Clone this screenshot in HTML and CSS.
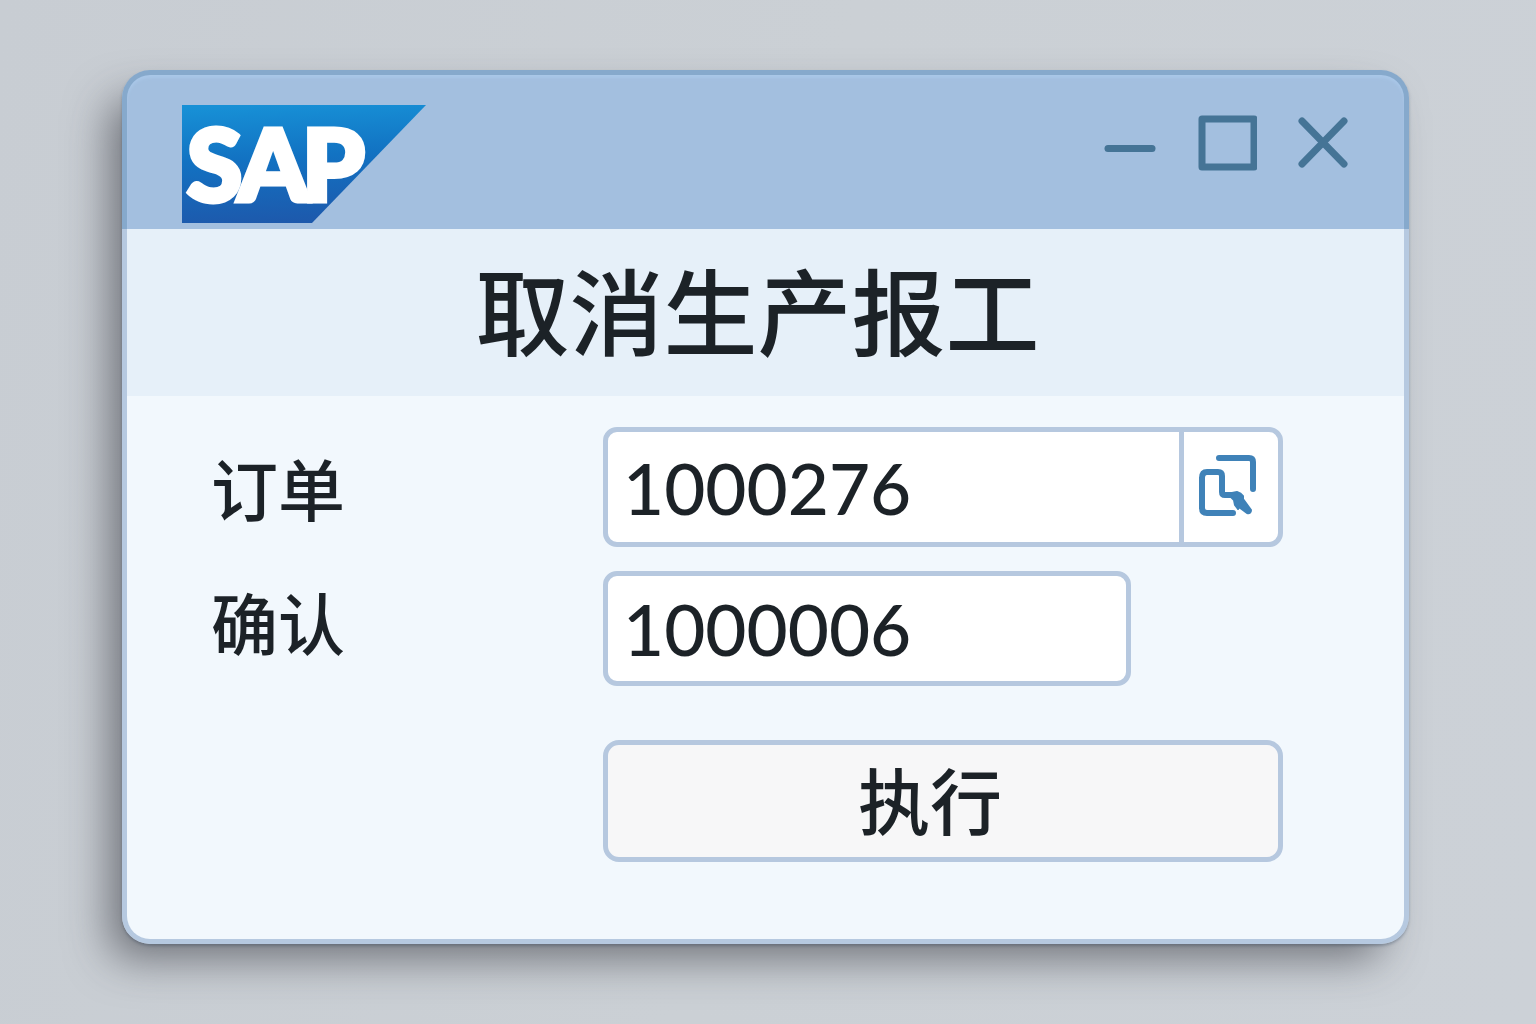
FILE: index.html
```html
<!DOCTYPE html>
<html lang="zh-CN">
<head>
<meta charset="utf-8">
<meta name="viewport" content="width=device-width, initial-scale=1">
<title>取消生产报工</title>
<link rel="stylesheet" href="styles.css">
</head>
<body>
<main class="window">
  <header class="titlebar">
    <svg class="logo" viewBox="0 0 244 118" role="img" aria-label="SAP">
      <defs>
        <linearGradient id="logo-fill" x1="0.3" y1="0" x2="0.4" y2="1">
          <stop offset="0" stop-color="#1790d6"/>
          <stop offset="0.45" stop-color="#1272c2"/>
          <stop offset="1" stop-color="#1d59ac"/>
        </linearGradient>
      </defs>
      <polygon points="0,0 244,0 130,118 0,118" fill="url(#logo-fill)"/>
      <text class="logo-text" x="5 56 120" y="96">SAP</text>
    </svg>
    <div class="controls">
      <button type="button" class="control" aria-label="最小化">
        <svg width="52" height="56" viewBox="0 0 52 56"><path d="M4 33.500H48" stroke-width="7"/></svg>
      </button>
      <button type="button" class="control" aria-label="最大化">
        <svg width="60" height="56" viewBox="0 0 60 56"><rect x="5" y="4" width="52" height="48" stroke-width="7"/></svg>
      </button>
      <button type="button" class="control" aria-label="关闭">
        <svg width="50" height="56" viewBox="0 0 50 56"><path d="M4 6L46 49M46 6L4 49" stroke-width="7"/></svg>
      </button>
    </div>
  </header>
  <h1 class="title">取消生产报工</h1>
  <form class="form">
    <div class="labels">
      <label for="order">订单</label>
      <label for="confirmation">确认</label>
    </div>
    <div class="fields">
      <div class="field order">
        <input id="order" type="text" value="1000276">
        <button type="button" class="lookup" aria-label="选择订单">
          <svg width="60" height="64" viewBox="0 0 60 64">
            <path d="M21 5H51Q55 5 55 9V36"/>
            <path d="M35 60H9Q4 60 4 55V25Q4 19 9 19H20Q24 19 24 23V39Q24 42 27 42H34"/>
            <path class="hand" d="M34 40L39 39Q43 40 45 43L45 46L53 57Q53 61 49 60L41 54L40 56L37 52L36 47L32 43Z"/>
          </svg>
        </button>
      </div>
      <div class="field confirmation">
        <input id="confirmation" type="text" value="1000006">
      </div>
      <button type="submit" class="execute">执行</button>
    </div>
  </form>
</main>
</body>
</html>
```
FILE: styles.css
```css
* {
  box-sizing: border-box;
}

body {
  margin: 0;
  min-height: 100vh;
  padding: 70px 127px 80px 122px;
  background: linear-gradient(100deg, #c8cdd3 0%, #cbd0d5 50%, #ccd1d7 100%);
  color: #1c2227;
  font-family: "Noto Sans CJK SC", sans-serif;
  font-weight: 500;
}

button,
input {
  margin: 0;
  padding: 0;
  border: 0;
  background: none;
  color: inherit;
  font: inherit;
}

button {
  cursor: pointer;
}

svg {
  display: block;
}

.window {
  border-radius: 28px;
  box-shadow: -20px 22px 44px -8px rgba(50, 52, 60, 0.6), 0 2px 3px rgba(70, 90, 115, 0.4);
}

.titlebar {
  display: flex;
  justify-content: space-between;
  align-items: flex-start;
  padding: 30px 56px 6px 55px;
  border: 5px solid #86a9cc;
  border-bottom: 0;
  border-radius: 28px 28px 0 0;
  background: #a3bfdf;
  box-shadow: inset 0 3px 3px #a9c7e8;
}

.logo {
  width: 244px;
  height: 118px;
}

.logo-text {
  fill: #fff;
  stroke: #fff;
  stroke-width: 5;
  font-family: Lato, sans-serif;
  font-size: 100px;
  font-weight: 900;
}

.controls {
  display: flex;
  gap: 41px;
  padding-top: 10px;
}

.control svg {
  fill: none;
  stroke: #457496;
  stroke-linecap: round;
  stroke-linejoin: round;
}

.title {
  margin: 0;
  padding: 0 16px 9px 0;
  border: solid #b6c9e0;
  border-width: 0 5px;
  background: #e6f0f9;
  font-size: 94px;
  font-weight: 500;
  line-height: 158px;
  text-align: center;
}

.form {
  display: flex;
  justify-content: space-between;
  padding: 0 121px 77px 84px;
  border: 5px solid #b6c9e0;
  border-top: 0;
  border-radius: 0 0 28px 28px;
  background: #f2f8fd;
}

.labels {
  display: flex;
  flex-direction: column;
  padding-top: 24px;
  font-size: 67px;
  line-height: 134px;
}

.fields {
  display: flex;
  flex-direction: column;
  width: 680px;
  padding-top: 31px;
}

.field {
  display: flex;
  border: 5px solid #b6c8df;
  border-radius: 14px;
  background: #fff;
  overflow: hidden;
}

.field input {
  flex: 1;
  min-width: 0;
  padding: 0 15px;
  font-family: Lato, sans-serif;
  font-size: 71px;
  outline: 0;
}

.order {
  height: 120px;
}

.confirmation {
  width: 528px;
  height: 115px;
  margin-top: 24px;
}

.lookup {
  display: flex;
  justify-content: center;
  align-items: center;
  width: 99px;
  padding: 0 6px 4px 0;
  border-left: 5px solid #b6c8df;
}

.lookup svg {
  fill: none;
  stroke: #3f82b8;
  stroke-width: 6;
  stroke-linecap: round;
  stroke-linejoin: round;
}

.lookup .hand {
  fill: #3f82b8;
  stroke-width: 2;
}

.execute {
  height: 122px;
  margin-top: 54px;
  padding: 0 26px 7px 0;
  border: 5px solid #b6c8df;
  border-radius: 16px;
  background: #f7f7f8;
  font-size: 72px;
  line-height: 1;
}
```
